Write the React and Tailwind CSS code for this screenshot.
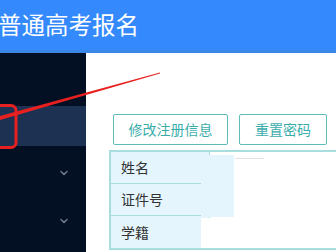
import { ChevronDown } from 'lucide-react';

const rows = ['姓名', '证件号', '学籍'];

export default function App() {
  return (
    <div
      className="relative w-[336px] h-[252px] overflow-hidden bg-white"
      style={{ fontFamily: '"Noto Sans CJK SC", "Noto Sans", sans-serif' }}
    >
      <header className="h-[53px] bg-[#348afd] border-b-[3px] border-[#3b87e6] flex items-center">
        <h1 className="-ml-[2px] text-[23.5px] leading-none text-white">普通高考报名</h1>
      </header>

      <div className="flex h-[199px]">
        <aside className="w-[86px] shrink-0 bg-[#030f23] flex flex-col pt-[53px]">
          <div className="h-[40px] bg-[#1d3253]" />
          <div className="h-[48px] flex items-center justify-end pr-[16px] pt-[6px]">
            <ChevronDown size={12} strokeWidth={2.5} className="text-[#7b8796]" />
          </div>
          <div className="h-[48px] flex items-center justify-end pr-[16px] pt-[6px]">
            <ChevronDown size={12} strokeWidth={2.5} className="text-[#7b8796]" />
          </div>
        </aside>

        <main className="flex-1 min-w-0 overflow-hidden pl-[23px] pt-[61px]">
          <div className="flex gap-[11px] ml-[4px]">
            <button className="w-[115px] shrink-0 h-[31px] border border-[#5cbdbb] rounded-[2px] text-[14px] text-[#3aadab]">
              修改注册信息
            </button>
            <button className="w-[88px] shrink-0 h-[31px] border border-[#5cbdbb] rounded-[2px] text-[14px] text-[#3aadab]">
              重置密码
            </button>
          </div>

          <div className="relative mt-[5px] w-[240px] border-2 border-r-0 border-[#a8dddd]">
            {rows.map((label, i) => (
              <div key={label} className="flex h-[32px]">
                <div
                  className={`w-[98px] shrink-0 bg-[#e5f5fd] flex items-center pl-[10px] text-[14px] text-[#333] ${
                    i < rows.length - 1 ? 'border-b border-[#a8dddd]' : ''
                  }`}
                >
                  {label}
                </div>
                <div className="flex-1 border-l border-[#a8dddd] bg-white" />
              </div>
            ))}
            {/* blurred personal data */}
            <div className="absolute left-[90px] top-[3px] w-[33px] h-[62px] bg-[#e5f5fd]" />
            <div className="absolute left-[90px] top-[66px] w-[33px] h-[30px] bg-white" />
            <div className="absolute left-[124px] top-[6px] w-[29px] h-px bg-[#e2e2e2]" />
          </div>
        </main>
      </div>

      <svg className="absolute inset-0 pointer-events-none" width="336" height="252" viewBox="0 0 336 252">
        <rect x="-12" y="105.5" width="28" height="42" rx="5" fill="none" stroke="#e8201f" strokeWidth="3" />
        <polygon points="0,116 160,72.6 160,73.6 0,120" fill="#e8201f" />
      </svg>
    </div>
  );
}
